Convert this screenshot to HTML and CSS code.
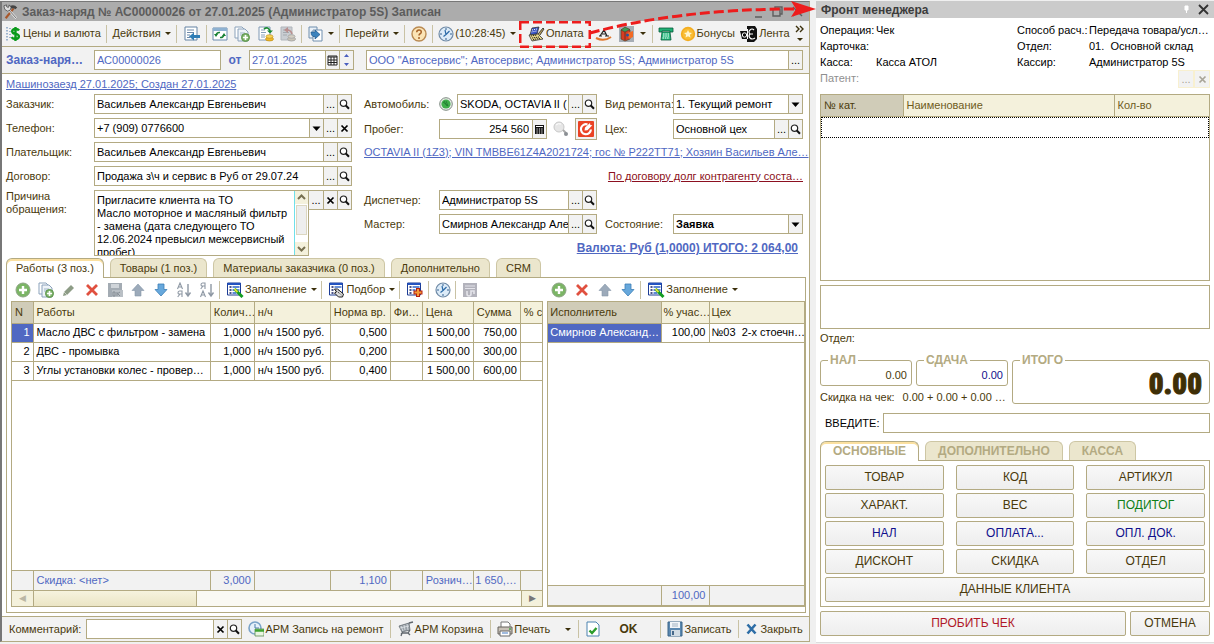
FILE: index.html
```
<!DOCTYPE html>
<html lang="ru">
<head>
<meta charset="utf-8">
<title>Заказ-наряд</title>
<link rel="stylesheet" href="styles.css">
</head>
<body>
<svg class="sprite" aria-hidden="true">
  <symbol id="i-tools" viewBox="0 0 18 18"><path d="M3 16 12 5" stroke="#a8572a" stroke-width="2.4"/><path d="M8 2q5-2 8 2l-2 2q-2-2-5-1z" fill="#444"/><path d="M5 5 15 16" stroke="#eee" stroke-width="2.4"/><path d="M5 5 15 16" stroke="#555" stroke-width="1"/><path d="M1 2l3-1 0 2 2 1 1-3 2 3-1 3-3 1-3-2z" fill="#ddd" stroke="#444" stroke-width=".8"/></symbol>
  <symbol id="i-dollar" viewBox="0 0 16 16"><path d="M1 1v14M4 2v1M4 5v1M4 8v1M4 11v1" stroke="#7a9ac0" stroke-width="1.4" stroke-dasharray="1.5 1.5"/><path d="M13 4.5q-1-1.6-3.6-1.5Q6 3.200 6.200 5.300 6.400 7.400 9.600 7.900 13 8.500 12.900 10.600 12.600 12.900 9.400 13 6.600 13 5.600 11.200M9.500 1v14" fill="none" stroke="#0b9a1b" stroke-width="2.400"/></symbol>
  <symbol id="i-docleft" viewBox="0 0 18 16"><path d="M2 1h12v13H2z" fill="#fff" stroke="#6583a4"/><path d="M4 4h7M4 6.500h7M4 9h3M4 11.500h3" stroke="#6d88a8"/><path d="M17 9v3h-6v2.500L6 10.500l5-4V9z" fill="#2f7db5"/></symbol>
  <symbol id="i-refresh" viewBox="0 0 16 16"><path d="M1 2h14v12H1z" fill="#fff" stroke="#6a8caf"/><path d="M1 2h14v3H1z" fill="#8fb2d2"/><path d="M4 9q1-3 4-2.500M12 9q-1 3-4 2.500" fill="none" stroke="#178032" stroke-width="1.500"/><path d="M2 8h4L4 11zM10 10h4l-2-3z" fill="#178032"/></symbol>
  <symbol id="i-docplus" viewBox="0 0 16 16"><path d="M1 1h7l2 2v9H1z" fill="#fff" stroke="#8ba2bb"/><path d="M4 3h7l3 3v9H4z" fill="#eef3f8" stroke="#8ba2bb"/><path d="M6 7h5M6 9h4" stroke="#9fb4c8"/><circle cx="11.500" cy="11.500" r="4" fill="#7fb36b" stroke="#5a9449"/><path d="M11.500 9v5M9 11.500h5" stroke="#fff" stroke-width="1.600"/></symbol>
  <symbol id="i-post" viewBox="0 0 16 16"><path d="M1 1h11v13H1z" fill="#fff" stroke="#7e98b4"/><path d="M3 4h4M3 6.500h5M3 9h4M3 11h4" stroke="#87a0ba"/><path d="M6 3q4-3 6 2" fill="none" stroke="#1c8a35" stroke-width="1.800"/><path d="M9 4.500h6l-3 3z" fill="#1c8a35"/><ellipse cx="11.500" cy="13" rx="4" ry="2" fill="#f0b92b" stroke="#b58511" stroke-width=".6"/><ellipse cx="11.500" cy="10.500" rx="3.500" ry="1.800" fill="#f9d458" stroke="#b58511" stroke-width=".6"/></symbol>
  <symbol id="i-unpost" viewBox="0 0 16 16"><path d="M1 1h11v13H1z" fill="#c9cdd2" stroke="#b0b5bb"/><path d="M3 4h6M3 6.500h6M3 9h4" stroke="#a4a9af"/><path d="M12 8Q11 4 7 4" fill="none" stroke="#b98e8e" stroke-width="1.600"/><path d="M8 1v6L4 4z" fill="#b98e8e"/><ellipse cx="11.500" cy="13" rx="4" ry="2" fill="#c9c3b6" stroke="#aaa"/><ellipse cx="11.500" cy="10.500" rx="3.500" ry="1.800" fill="#d4cec2" stroke="#aaa"/></symbol>
  <symbol id="i-goto" viewBox="0 0 16 16"><path d="M1 1h8v11H1z" fill="#e9f0f7" stroke="#6f8eae"/><path d="M5 4h9v11H5z" fill="#fff" stroke="#6f8eae"/><path d="M3 6h4V4l5 4.500L7 13v-2.500H5q-2-1-2-4.500z" fill="#3c83bd" stroke="#1d5689" stroke-width=".7"/></symbol>
  <symbol id="i-help" viewBox="0 0 16 16"><circle cx="8" cy="8" r="7" fill="#fbe4b6" stroke="#b98a52" stroke-width="1.400"/><path d="M5.700 6.300Q5.800 4 8 4t2.300 2Q10.300 7.200 8.800 8 8 8.500 8 9.600" fill="none" stroke="#a8642a" stroke-width="1.500"/><circle cx="8" cy="12" r="1" fill="#a8642a"/></symbol>
  <symbol id="i-clock" viewBox="0 0 16 16"><circle cx="8" cy="8" r="7" fill="#dcebf8" stroke="#6f8aa6" stroke-width="1.200"/><path d="M8 2v2M8 12v2M2 8h2M12 8h2" stroke="#34618f"/><path d="M7 4l1 4.500-2.500 2M8 8.500 11.500 5" fill="none" stroke="#2c6ba8" stroke-width="1.200"/></symbol>
  <symbol id="i-cash" viewBox="0 0 18 16"><path d="M5 2 12 1 10 8 3 9z" fill="#3a55c5" stroke="#222" stroke-width=".7"/><path d="M5 4l5-1M4.500 6l5-1" stroke="#fff" stroke-dasharray="1 1"/><path d="M2 9l9-1 5 5-11 2z" fill="#e8d98a" stroke="#333" stroke-width=".8"/><path d="M4 10l6-1M5 12l7-1M6 13.500l7-1" stroke="#222" stroke-dasharray="1.200 .8"/><path d="M11 8l5-6 1 1-4 6" fill="#b9a15b" stroke="#222" stroke-width=".8"/></symbol>
  <symbol id="i-sign" viewBox="0 0 18 16"><path d="M1 12q8 4 15-1" fill="none" stroke="#e1772d" stroke-width="2"/><path d="M5 10 9 4l3 6M7 8h4M4 10h3M10 10h4" fill="none" stroke="#222" stroke-width="1.200"/></symbol>
  <symbol id="i-fire" viewBox="0 0 18 16"><path d="M1 0h15v16H1z" fill="#a6adb5"/><path d="M3 4 7 2l5 2v9l-5 2-4-2z" fill="#d83c22" stroke="#542" stroke-width=".7"/><path d="M7 6v8" fill="none" stroke="#532" stroke-width=".8"/><path d="M3 4 7 1l5 2.500L7 6z" fill="#3a9d57" stroke="#532" stroke-width=".6"/><path d="M9 7l6-2v6l-4 2z" fill="#f26a24"/><circle cx="9.500" cy="9" r="1.500" fill="#24539c"/></symbol>
  <symbol id="i-phone" viewBox="0 0 16 16"><path d="M1 2h14v4h-3V5H4v1H1z" fill="#1faf74" stroke="#075c3b" stroke-width=".8"/><path d="M4 6h8l1 8H3z" fill="#25b97d" stroke="#075c3b" stroke-width=".8"/><path d="M5 8h6M5 10h6M4.500 12h7" stroke="#fff" stroke-dasharray="1.500 .8"/></symbol>
  <symbol id="i-star" viewBox="0 0 16 16"><circle cx="8" cy="8" r="7.200" fill="#f4ad20"/><circle cx="8" cy="8" r="5.500" fill="#f9bd35"/><path d="M8 4l1.200 2.600 2.800.3-2.100 1.900.6 2.800L8 10.200l-2.500 1.400.6-2.800L4 6.900l2.800-.3z" fill="#fff5cf"/></symbol>
  <symbol id="i-tape" viewBox="0 0 18 16"><path d="M0 5h8v8H2z" fill="#111"/><path d="M7 0h8l2 3v10l-3 3H7z" fill="#111"/><circle cx="4.500" cy="9" r="2.200" fill="none" stroke="#fff"/><path d="M14 4q-2-2-4 0t0 4h3M10 8q-2 2 0 4t5 0M7.500 3v10" fill="none" stroke="#fff" stroke-width="1.100"/></symbol>
  <symbol id="i-calendar" viewBox="0 0 11 11"><path d="M1 1h9v9H1z" fill="#fff" stroke="#222"/><path d="M1 2h9M1 5h9M1 7.500h9M4 2v8M7 2v8" stroke="#222"/></symbol>
  <symbol id="i-calc" viewBox="0 0 11 11"><path d="M1 1h9v9H1z" fill="#111"/><path d="M2 2.500h7" stroke="#fff"/><path d="M2.500 5h7M2.500 7h7M2.500 9h7" stroke="#fff" stroke-dasharray="1.200 1.200"/></symbol>
  <symbol id="i-find" viewBox="0 0 11 11"><circle cx="4.500" cy="4.200" r="3.200" fill="#fff" stroke="#222" stroke-width="1.200"/><path d="M6.800 6.500 10 9.800" stroke="#111" stroke-width="2"/></symbol>
  <symbol id="i-x" viewBox="0 0 11 11"><path d="M2.500 2.500l6 6M8.500 2.500l-6 6" stroke="currentColor" stroke-width="1.700"/></symbol>
  <symbol id="i-down" viewBox="0 0 11 11"><path d="M1.500 3.500h8l-4 4.500z" fill="currentColor"/></symbol>
  <symbol id="i-skoda" viewBox="0 0 14 14"><circle cx="7" cy="7" r="6.300" fill="#e8ece8" stroke="#7e8a80"/><circle cx="7" cy="7" r="4.600" fill="#3fae49"/><path d="M4 5l5 4M5 4l3 5M7 4l2 5" stroke="#1f7a30" stroke-width=".8" fill="none"/></symbol>
  <symbol id="i-lens" viewBox="0 0 16 16"><circle cx="6" cy="6" r="5" fill="#e6e6e6" stroke="#c8c8c8"/><path d="M3 4q2-2 5-1" stroke="#fff" fill="none"/><path d="M10 9l3 3" stroke="#aaa" stroke-width="2"/><circle cx="13" cy="13" r="2" fill="#8b8f94"/></symbol>
  <symbol id="i-target" viewBox="0 0 16 16"><rect width="16" height="16" rx="1" fill="#ea4324"/><path d="M9.500 3.500a5 5 0 1 0 3.400 5" fill="none" stroke="#fff" stroke-width="2.200"/><path d="M6.500 9.500 7 6.500 12 2l.3 2 2 .2-4.800 5z" fill="#fff"/></symbol>
  <symbol id="i-add" viewBox="0 0 16 16"><circle cx="8" cy="8" r="7" fill="#7bb565" stroke="#8da584"/><path d="M8 4v8M4 8h8" stroke="#fff" stroke-width="2.400"/></symbol>
  <symbol id="i-pencil" viewBox="0 0 16 16"><path d="M3 10 10 3l3 3-7 7-4 1z" fill="#8d9c86"/><path d="M3 10l3 3" stroke="#ccd3c8"/></symbol>
  <symbol id="i-del" viewBox="0 0 16 16"><path d="M3 3l10 10M13 3 3 13" stroke="#e0503f" stroke-width="2.800"/></symbol>
  <symbol id="i-diskg" viewBox="0 0 16 16"><path d="M1 1h14v14H1z" fill="#a3abb3"/><path d="M4 2h8v4H4z" fill="#cfd4d9"/><path d="M5 8h11v7H5z" fill="#b9bfc5"/><path d="M6 10h2v4H6zM10 10v4M10 12l3-2M11 12l2 2" stroke="#858d95" fill="none"/></symbol>
  <symbol id="i-up" viewBox="0 0 16 16"><path d="M8 2l6 6.500H11V14H5V8.500H2z" fill="#9caaba" stroke="#8797a9" stroke-width=".6"/></symbol>
  <symbol id="i-dn" viewBox="0 0 16 16"><path d="M8 14 2 7.500H5V2h6v5.500h3z" fill="#67a8dc" stroke="#3c7fb6" stroke-width=".8"/></symbol>
  <symbol id="i-sort" viewBox="0 0 16 16"><path d="M1.500 7 4 1l2.500 6M2.300 5h3.400M6 15V9H3.500Q2 9.200 2 10.700T3.500 12H6M4 12l-2.300 3" fill="none" stroke="#8e98a4" stroke-width="1.100"/><path d="M12 2v11M9.500 10.500 12 14l2.500-3.500" fill="none" stroke="#8e98a4" stroke-width="1.400"/></symbol>
  <symbol id="i-sortd" viewBox="0 0 16 16"><path d="M1.500 15 4 9l2.500 6M2.300 13h3.400M6 7V1H3.500Q2 1.200 2 2.700T3.500 4H6M4 4 1.700 7" fill="none" stroke="#8e98a4" stroke-width="1.100"/><path d="M12 2v11M9.500 10.500 12 14l2.500-3.500" fill="none" stroke="#8e98a4" stroke-width="1.400"/></symbol>
  <symbol id="i-fill" viewBox="0 0 17 16"><path d="M1 1h13v12H1z" fill="#fff" stroke="#1c3c95"/><path d="M1 2h13" stroke="#2453bf" stroke-width="2"/><path d="M3 5h2M3 8h2M3 11h2" stroke="#101c60" stroke-width="1.700"/><path d="M6 5h7M6 8h7M6 11h4" stroke="#2b63c9" stroke-width="1.400"/><path d="M8 7l8 8" stroke="#129c20" stroke-width="3"/><path d="M8 7l3 3" stroke="#d8de31" stroke-width="2"/></symbol>
  <symbol id="i-pick" viewBox="0 0 17 16"><path d="M1 1h13v12H1z" fill="#fff" stroke="#1c3c95"/><path d="M1 2h13" stroke="#2453bf" stroke-width="2"/><path d="M3 5h2M3 8h2M3 11h2" stroke="#101c60" stroke-width="1.700"/><path d="M6 5h7" stroke="#2b63c9" stroke-width="1.400"/><path d="M6 7h3l6 5-1 3h-4L6 11l2-1z" fill="#ddd" stroke="#222"/><path d="M8 9l5 4M10 8l4 3" stroke="#222" stroke-dasharray="1 1"/></symbol>
  <symbol id="i-addrow" viewBox="0 0 17 16"><path d="M1 1h13v12H1z" fill="#fff" stroke="#1c3c95"/><path d="M1 2h13" stroke="#2453bf" stroke-width="2"/><path d="M3 5h2M3 8h2M3 11h2" stroke="#101c60" stroke-width="1.700"/><path d="M6 5h7M6 8h3" stroke="#2b63c9" stroke-width="1.400"/><path d="M11.500 6v9M7 10.500h9" stroke="#b52010" stroke-width="4"/><path d="M11.500 7v7M8 10.500h7" stroke="#f49a38" stroke-width="2"/></symbol>
  <symbol id="i-book" viewBox="0 0 16 16"><path d="M1 1h14v14H1z" fill="#b3b3bc"/><path d="M3 4h10M3 6.500h10" stroke="#e4e4ea" stroke-width="1.200"/><path d="M5 9v3q0 2 2 2t2-2V9h3v3" fill="none" stroke="#e4e4ea" stroke-width="1.600"/></symbol>
  <symbol id="i-clockg" viewBox="0 0 16 16"><circle cx="7" cy="7" r="6" fill="#e6f1fa" stroke="#7aa3c8" stroke-width="1.600"/><path d="M7 3v4h4" fill="none" stroke="#4b7dab"/><path d="M7 8h9v7H7z" fill="#e9f5e2" stroke="#5a8a50" stroke-width=".8"/><path d="M7 9.500h9" stroke="#3fa331" stroke-width="2.500"/></symbol>
  <symbol id="i-cart" viewBox="0 0 16 16"><path d="M1 5l10-3 1 7-8 2z" fill="#9aa1a8" stroke="#666d74" stroke-width=".8"/><path d="M3 5l2 5M6 4l1 5M9 3l1 6M2 7l9-2" stroke="#e0e4e8" stroke-width=".8"/><path d="M11 2l4-1M12 9l-2 3H4l1-1M4 12l-1 3M10 12l2 2" fill="none" stroke="#5f666d" stroke-width="1.300"/></symbol>
  <symbol id="i-print" viewBox="0 0 16 16"><path d="M4 6V1h7l2 2v3" fill="#fff" stroke="#777"/><path d="M1 6h14v7H1z" fill="#c9c2b8" stroke="#67625c"/><path d="M3 10h10v5H3z" fill="#fff" stroke="#666"/><path d="M5 12h6" stroke="#4177c0"/><circle cx="13" cy="8" r=".9" fill="#3da23d"/></symbol>
  <symbol id="i-ok" viewBox="0 0 14 16"><path d="M1 1h9l3 3v11H1z" fill="#fff" stroke="#4c83b0"/><path d="M3.500 9.500 6 12l4.500-5" fill="none" stroke="#2b9c2b" stroke-width="2.400"/></symbol>
  <symbol id="i-disk" viewBox="0 0 16 16"><path d="M1 1h14v14H1z" fill="#5b88b0" stroke="#3b6488"/><path d="M3 1h10v6H3z" fill="#f2f5f8"/><path d="M5 3h6M5 5h6" stroke="#a3b3c2"/><path d="M4 9h9v6H4z" fill="#d2dce4"/><path d="M5 10h2v4H5z" fill="#47698a"/></symbol>
  <symbol id="i-close" viewBox="0 0 14 14"><path d="M2.500 2.500l8 9M10.500 2.500l-8 9" stroke="#2d6da6" stroke-width="2.600"/></symbol>
</svg>

<main class="desk">
  <section class="order">
    <header class="title">
      <svg class="i18"><use href="#i-tools"/></svg>
      <h1>Заказ-наряд № АС00000026 от 27.01.2025 (Администратор 5S) Записан</h1>
      <svg class="winctl" viewBox="0 0 54 14"><path d="M2 12h7M20 4h7v7h-7zM22 4V2h7v7h-2M40 2l9 9M49 2l-9 9" fill="none" stroke="#5d5d5d" stroke-width="1.400"/></svg>
    </header>

    <nav class="bar top">
      <button class="tb"><svg class="i16"><use href="#i-dollar"/></svg>Цены и валюта</button><i class="sep"></i>
      <button class="tb more">Действия</button><i class="sep"></i>
      <button class="tb" aria-label="Показать в списке"><svg class="i18"><use href="#i-docleft"/></svg></button><i class="sep"></i>
      <button class="tb" aria-label="Обновить"><svg class="i16"><use href="#i-refresh"/></svg></button>
      <button class="tb" aria-label="Копировать"><svg class="i16"><use href="#i-docplus"/></svg></button>
      <i class="gap"></i>
      <button class="tb" aria-label="Провести"><svg class="i16"><use href="#i-post"/></svg></button>
      <button class="tb" aria-label="Отменить проведение"><svg class="i16"><use href="#i-unpost"/></svg></button><i class="sep"></i>
      <button class="tb more" aria-label="Ввести на основании"><svg class="i16"><use href="#i-goto"/></svg></button><i class="sep"></i>
      <button class="tb more">Перейти</button><i class="sep"></i>
      <button class="tb" aria-label="Справка"><svg class="i16"><use href="#i-help"/></svg></button><i class="sep"></i>
      <button class="tb more"><svg class="i16"><use href="#i-clock"/></svg>(10:28:45)</button>
      <span class="callout">
        <button class="tb"><svg class="i18"><use href="#i-cash"/></svg>Оплата</button>
        <svg class="frame" aria-hidden="true"><rect x="1" y="1" width="70" height="25" fill="none" stroke="#ed1c1c" stroke-width="3" stroke-dasharray="9 4"/></svg>
        <svg class="arrow" viewBox="0 0 228 36" aria-hidden="true"><path d="M1 32Q90 8 206 8" fill="none" stroke="#ed1c1c" stroke-width="3" stroke-dasharray="10 4"/><path d="M227 8 202 0l5 8-5 8z" fill="#ed1c1c"/></svg>
      </span>
      <button class="tb" aria-label="Подпись"><svg class="i18"><use href="#i-sign"/></svg></button>
      <button class="tb more" aria-label="Оборудование"><svg class="i18"><use href="#i-fire"/></svg></button><i class="sep"></i>
      <button class="tb" aria-label="Звонок"><svg class="i16"><use href="#i-phone"/></svg></button>
      <button class="tb"><svg class="i16"><use href="#i-star"/></svg>Бонусы</button>
      <button class="tb"><svg class="i18"><use href="#i-tape"/></svg>Лента</button>
      <button class="tb over" aria-label="Ещё"><svg viewBox="0 0 10 18"><path d="M1 1l3 3-3 3M5 1l3 3-3 3" fill="none" stroke="#3b2f0b" stroke-width="1.400"/><path d="M2 13h6l-3 3z" fill="#3b2f0b"/></svg></button>
    </nav>

    <div class="bar ident">
      <label class="idlabel" for="num">Заказ-наря…</label>
      <span class="field fnum"><input id="num" class="blue" value="АС00000026"></span>
      <label class="idot" for="date">от</label>
      <span class="field fdate"><input id="date" class="blue" value="27.01.2025"><button aria-label="Календарь"><svg><use href="#i-calendar"/></svg></button><button class="spin" aria-label="Изменить дату"><svg viewBox="0 0 11 18"><path d="M3 6h5L5.500 3zM3 12h5l-2.500 3z" fill="#4a5fc0"/></svg></button></span>
      <span class="field forg"><input class="blue" aria-label="Организация" value="ООО &quot;Автосервис&quot;; Автосервис; Администратор 5S; Администратор 5S"><button>...</button></span>
    </div>

    <div class="form">
      <a class="wide" href="#">Машинозаезд 27.01.2025; Создан 27.01.2025</a>
      <div class="col">
        <div class="row"><label for="cust">Заказчик:</label><span class="field"><input id="cust" value="Васильев Александр Евгеньевич"><button>...</button><button aria-label="Открыть"><svg><use href="#i-find"/></svg></button></span></div>
        <div class="row"><label for="tel">Телефон:</label><span class="field"><input id="tel" value="+7 (909) 0776600"><button aria-label="Список"><svg><use href="#i-down"/></svg></button><button>...</button><button aria-label="Очистить"><svg><use href="#i-x"/></svg></button></span></div>
        <div class="row"><label for="payer">Плательщик:</label><span class="field"><input id="payer" value="Васильев Александр Евгеньевич"><button>...</button><button aria-label="Открыть"><svg><use href="#i-find"/></svg></button></span></div>
        <div class="row"><label for="deal">Договор:</label><span class="field"><input id="deal" value="Продажа з\ч и сервис в Руб от 29.07.24"><button>...</button><button aria-label="Открыть"><svg><use href="#i-find"/></svg></button></span></div>
        <div class="row reason"><label for="why">Причина<br>обращения:</label>
          <div class="memo"><textarea id="why">Пригласите клиента на ТО
Масло моторное и масляный фильтр - замена (дата следующего ТО 12.06.2024 превысил межсервисный пробег)</textarea><div class="vscroll"><svg viewBox="0 0 13 13"><path d="M3 8l3.500-3.500L10 8" fill="none" stroke="#777050" stroke-width="2"/></svg><i></i><svg viewBox="0 0 13 13"><path d="M3 5l3.500 3.500L10 5" fill="none" stroke="#777050" stroke-width="2"/></svg></div></div>
          <span class="field tail"><button>...</button><button aria-label="Очистить"><svg><use href="#i-x"/></svg></button><button aria-label="Открыть"><svg><use href="#i-find"/></svg></button></span>
        </div>
      </div>
      <div class="col">
        <div class="row quad"><label for="car">Автомобиль:</label><div class="carcell"><svg class="brand"><use href="#i-skoda"/></svg><span class="field"><input id="car" value="SKODA, OCTAVIA II ("><button>...</button><button aria-label="Открыть"><svg><use href="#i-find"/></svg></button></span></div>
          <label for="kind">Вид ремонта:</label><span class="field"><select id="kind"><option>1. Текущий ремонт</option></select><button aria-label="Список"><svg><use href="#i-down"/></svg></button></span></div>
        <div class="row quad"><label for="km">Пробег:</label><div class="kmcell"><span class="field"><input id="km" class="num" value="254 560"><button aria-label="Калькулятор"><svg><use href="#i-calc"/></svg></button></span><svg class="i16"><use href="#i-lens"/></svg><button class="target" aria-label="Запись"><svg class="i16"><use href="#i-target"/></svg></button></div>
          <label for="shop">Цех:</label><span class="field"><input id="shop" value="Основной цех"><button>...</button><button aria-label="Открыть"><svg><use href="#i-find"/></svg></button></span></div>
        <div class="row"><a href="#">OCTAVIA II (1Z3); VIN TMBBE61Z4A2021724; гос № Р222ТТ71; Хозяин Васильев Але…</a></div>
        <div class="row end"><a class="debt" href="#">По договору долг контрагенту соста…</a></div>
        <div class="row quad"><label for="disp">Диспетчер:</label><span class="field"><input id="disp" value="Администратор 5S"><button>...</button><button aria-label="Открыть"><svg><use href="#i-find"/></svg></button></span></div>
        <div class="row quad"><label for="master">Мастер:</label><span class="field"><input id="master" value="Смирнов Александр Але"><button>...</button><button aria-label="Открыть"><svg><use href="#i-find"/></svg></button></span>
          <label for="state">Состояние:</label><span class="field"><select id="state" class="strong"><option>Заявка</option></select><button aria-label="Список"><svg><use href="#i-down"/></svg></button></span></div>
        <div class="row end"><a class="total" href="#">Валюта: Руб (1,0000) ИТОГО: 2 064,00</a></div>
      </div>
    </div>

    <div class="tabs">
      <button class="tab on">Работы (3 поз.)</button><button class="tab">Товары (1 поз.)</button><button class="tab">Материалы заказчика (0 поз.)</button><button class="tab">Дополнительно</button><button class="tab">CRM</button>
    </div>
    <div class="sheet">
      <div class="pane">
        <div class="tools">
          <button class="tb" aria-label="Добавить"><svg class="i16"><use href="#i-add"/></svg></button>
          <button class="tb" aria-label="Добавить копированием"><svg class="i16"><use href="#i-docplus"/></svg></button>
          <button class="tb" aria-label="Изменить"><svg class="i16"><use href="#i-pencil"/></svg></button>
          <button class="tb" aria-label="Удалить"><svg class="i16"><use href="#i-del"/></svg></button>
          <button class="tb" aria-label="Завершить"><svg class="i16"><use href="#i-diskg"/></svg></button>
          <button class="tb" aria-label="Вверх"><svg class="i16"><use href="#i-up"/></svg></button>
          <button class="tb" aria-label="Вниз"><svg class="i16"><use href="#i-dn"/></svg></button>
          <button class="tb" aria-label="По возрастанию"><svg class="i16"><use href="#i-sort"/></svg></button>
          <button class="tb" aria-label="По убыванию"><svg class="i16"><use href="#i-sortd"/></svg></button><i class="sep"></i>
          <button class="tb more"><svg class="i18"><use href="#i-fill"/></svg>Заполнение</button><i class="sep"></i>
          <button class="tb more"><svg class="i18"><use href="#i-pick"/></svg>Подбор</button><i class="sep"></i>
          <button class="tb" aria-label="Добавить строки"><svg class="i18"><use href="#i-addrow"/></svg></button><i class="sep"></i>
          <button class="tb" aria-label="Время"><svg class="i16"><use href="#i-clock"/></svg></button><i class="sep"></i>
          <button class="tb" aria-label="Журнал"><svg class="i16"><use href="#i-book"/></svg></button>
        </div>
        <div class="grid">
          <table>
            <colgroup><col class="w21"><col><col class="w44"><col class="w76"><col class="w60"><col class="w32"><col class="w51"><col class="w47"><col class="w22"></colgroup>
            <thead><tr><th class="cur">N</th><th>Работы</th><th>Колич…</th><th>н/ч</th><th>Норма вр.</th><th>Фи…</th><th>Цена</th><th>Сумма</th><th>% с</th></tr></thead>
            <tbody>
              <tr><td class="num sel">1</td><td>Масло ДВС с фильтром - замена</td><td class="num">1,000</td><td>н/ч 1500 руб.</td><td class="num">0,500</td><td></td><td class="num">1 500,00</td><td class="num">750,00</td><td></td></tr>
              <tr><td class="num">2</td><td>ДВС - промывка</td><td class="num">1,000</td><td>н/ч 1500 руб.</td><td class="num">0,200</td><td></td><td class="num">1 500,00</td><td class="num">300,00</td><td></td></tr>
              <tr><td class="num">3</td><td>Углы установки колес - провер…</td><td class="num">1,000</td><td>н/ч 1500 руб.</td><td class="num">0,400</td><td></td><td class="num">1 500,00</td><td class="num">600,00</td><td></td></tr>
            </tbody>
          </table>
          <div class="void"></div>
          <table class="sum">
            <colgroup><col class="w21"><col><col class="w44"><col class="w76"><col class="w60"><col class="w32"><col class="w51"><col class="w47"><col class="w22"></colgroup>
            <tbody><tr><td></td><td>Скидка: &lt;нет&gt;</td><td class="num">3,000</td><td></td><td class="num">1,100</td><td></td><td>Рознич…</td><td class="num">1 650,…</td><td></td></tr></tbody>
          </table>
          <div class="hscroll"><span class="dim">◀</span><i></i><span>▶</span></div>
        </div>
      </div>
      <div class="pane">
        <div class="tools">
          <button class="tb" aria-label="Добавить"><svg class="i16"><use href="#i-add"/></svg></button>
          <button class="tb" aria-label="Удалить"><svg class="i16"><use href="#i-del"/></svg></button>
          <button class="tb" aria-label="Вверх"><svg class="i16"><use href="#i-up"/></svg></button>
          <button class="tb" aria-label="Вниз"><svg class="i16"><use href="#i-dn"/></svg></button><i class="sep"></i>
          <button class="tb more"><svg class="i18"><use href="#i-fill"/></svg>Заполнение</button>
        </div>
        <div class="grid">
          <table>
            <colgroup><col><col class="w48"><col class="w95"></colgroup>
            <thead><tr><th class="cur">Исполнитель</th><th>% учас…</th><th>Цех</th></tr></thead>
            <tbody><tr><td class="sel">Смирнов Александ…</td><td class="num">100,00</td><td>№03&nbsp; 2-х стоечн…</td></tr></tbody>
          </table>
          <div class="void"></div>
          <table class="sum">
            <colgroup><col><col class="w48"><col class="w95"></colgroup>
            <tbody><tr><td></td><td class="num">100,00</td><td></td></tr></tbody>
          </table>
        </div>
      </div>
    </div>

    <footer class="bar foot">
      <label for="note">Комментарий:</label>
      <span class="field fnote"><input id="note"><button aria-label="Очистить"><svg><use href="#i-x"/></svg></button><button aria-label="Открыть"><svg><use href="#i-find"/></svg></button></span>
      <button class="tb"><svg class="i16"><use href="#i-clockg"/></svg>АРМ Запись на ремонт</button><i class="sep"></i>
      <button class="tb"><svg class="i16"><use href="#i-cart"/></svg>АРМ Корзина</button><i class="sep"></i>
      <button class="tb more print"><svg class="i16"><use href="#i-print"/></svg>Печать</button><i class="sep"></i>
      <button class="tb okb"><svg class="i16"><use href="#i-ok"/></svg>OK</button><i class="sep"></i>
      <button class="tb"><svg class="i16"><use href="#i-disk"/></svg>Записать</button><i class="sep"></i>
      <button class="tb"><svg class="i14"><use href="#i-close"/></svg>Закрыть</button>
    </footer>
  </section>

  <aside class="front">
    <header class="title light"><h2>Фронт менеджера</h2>
      <svg class="pin" viewBox="0 0 30 14"><path d="M4 3h3v4H4zM5.500 7v3" fill="#fff" stroke="#fff"/><path d="M18 2l9 9M27 2l-9 9" stroke="#333" stroke-width="1.800"/></svg>
    </header>
    <div class="body">
      <dl class="info">
        <dt>Операция:</dt><dd>Чек</dd><dt>Способ расч.:</dt><dd>Передача товара/усл…</dd>
        <dt>Карточка:</dt><dd></dd><dt>Отдел:</dt><dd>01.&nbsp; Основной склад</dd>
        <dt>Касса:</dt><dd>Касса АТОЛ</dd><dt>Кассир:</dt><dd>Администратор 5S</dd>
        <dt class="off">Патент:</dt><dd class="patent"><button disabled>...</button><button disabled aria-label="Очистить"><svg><use href="#i-x"/></svg></button></dd>
      </dl>
      <div class="grid goods">
        <table>
          <colgroup><col class="w82"><col><col class="w95"></colgroup>
          <thead><tr><th class="cur">№ кат.</th><th>Наименование</th><th>Кол-во</th></tr></thead>
        </table>
        <div class="focusrow"></div>
        <div class="void"></div>
      </div>
      <div class="note"></div>
      <div class="dept">Отдел:</div>
      <div class="sums">
        <fieldset><legend>НАЛ</legend><output>0.00</output></fieldset>
        <fieldset><legend>СДАЧА</legend><output class="navy">0.00</output></fieldset>
        <fieldset class="grand"><legend>ИТОГО</legend><output>0.00</output></fieldset>
        <div class="disc"><span>Скидка на чек:</span><span>0.00 + 0.00 + 0.00 …</span></div>
      </div>
      <div class="enter"><label for="code">ВВЕДИТЕ:</label><span class="field"><input id="code"></span></div>
      <div class="tabs caps">
        <button class="tab on">ОСНОВНЫЕ</button><button class="tab">ДОПОЛНИТЕЛЬНО</button><button class="tab">КАССА</button>
      </div>
      <div class="keys">
        <button class="key">ТОВАР</button><button class="key">КОД</button><button class="key">АРТИКУЛ</button>
        <button class="key">ХАРАКТ.</button><button class="key">ВЕС</button><button class="key green">ПОДИТОГ</button>
        <button class="key navy">НАЛ</button><button class="key navy">ОПЛАТА...</button><button class="key navy">ОПЛ. ДОК.</button>
        <button class="key">ДИСКОНТ</button><button class="key">СКИДКА</button><button class="key">ОТДЕЛ</button>
        <button class="key full">ДАННЫЕ КЛИЕНТА</button>
      </div>
      <div class="final"><button class="key red">ПРОБИТЬ ЧЕК</button><button class="key">ОТМЕНА</button></div>
    </div>
  </aside>
</main>
</body>
</html>
```

FILE: styles.css
```
:root {
  --line: #b3aa82;
  --brown: #4a3a0c;
  --blue: #5068c2;
  --face: #f2f2f2;
  --head: #f4f1dc;
  --tab: #ebe6cd;
}
* { box-sizing: border-box; }
body {
  margin: 0;
  background: #f0f0f0;
  color: var(--brown);
  font: 11px/13px "Liberation Sans", Arial, sans-serif;
}
button, input, select, textarea { font: inherit; color: inherit; margin: 0; }
.sprite { position: absolute; width: 0; height: 0; }
.i18 { width: 18px; height: 16px; flex: none; }
.i16 { width: 16px; height: 16px; flex: none; }
.i14 { width: 14px; height: 14px; flex: none; }
a { color: var(--blue); white-space: nowrap; }

.desk {
  display: grid;
  grid-template-columns: minmax(0, 810fr) minmax(0, 398fr);
  column-gap: 6px;
  min-height: 100vh;
}
.order {
  display: flex;
  flex-direction: column;
  margin: 1px 0 2px;
  border: 1px solid #777;
  border-left-width: 2px;
  border-color: #777 var(--line) var(--line) #777;
  background: #fff;
}
.title {
  display: flex;
  align-items: center;
  gap: 2px;
  height: 19px;
  background: #acacac;
  color: #5c5c5c;
}
.title h1, .title h2 { flex: 1; margin: 0; font-size: 12px; line-height: 16px; white-space: nowrap; }
.winctl { width: 54px; height: 14px; margin-right: 2px; }

.bar { display: flex; align-items: center; background: var(--face); border-bottom: 1px solid var(--line); }
.tb {
  display: inline-flex;
  align-items: center;
  gap: 1px;
  padding: 0 4px;
  border: 0;
  background: none;
  white-space: nowrap;
}
.more::after { content: ""; margin-left: 3px; border: 3px solid transparent; border-top-color: #3b2f0b; border-bottom: 0; }
.sep { flex: none; width: 1px; height: 18px; margin: 0 2px; background: #c9c2a4; }
.gap { width: 2px; }
.top { height: 26px; justify-content: space-between; padding: 0 2px; }
.top .tb { padding: 0 2px; }
.callout { position: relative; display: inline-flex; padding: 0 6px; }
.frame { position: absolute; left: 0; top: -5px; width: 72px; height: 27px; }
.arrow { position: absolute; left: 70px; top: -25px; width: 228px; height: 36px; z-index: 2; }
.over svg { width: 10px; height: 18px; }

.field { display: flex; flex: 1; min-width: 0; height: 20px; border: 1px solid var(--line); background: #fff; color: #000; }
.field input, .field select {
  flex: 1;
  min-width: 0;
  width: 0;
  padding: 0 0 0 2px;
  border: 0;
  background: none;
  outline: 0;
  appearance: none;
}
.field button {
  display: flex;
  flex: none;
  align-items: center;
  justify-content: center;
  width: 14px;
  padding: 0;
  border: 0;
  border-left: 1px solid var(--line);
  background: var(--face);
  line-height: 12px;
}
.field button svg, .patent svg { width: 11px; height: 11px; }
.field button.spin svg { height: 18px; }
.field .blue { color: var(--blue); }
.field .num { text-align: right; padding-right: 3px; }
.field .strong { font-weight: bold; }

.ident { height: 27px; padding: 0 6px 0 4px; color: var(--blue); font-weight: bold; }
.ident input, .ident button { font-weight: normal; }
.idlabel { width: 88px; font-size: 12px; }
.idot { width: 28px; text-align: center; font-size: 12px; }
.fnum { flex: 126 1 0; }
.fdate { flex: 104 1 0; margin-right: 12px; }
.forg { flex: 439 1 0; }

.form {
  display: grid;
  grid-template-columns: minmax(0, 346fr) minmax(0, 439fr);
  gap: 3px 12px;
  padding: 4px 6px 0 4px;
}
.wide { grid-column: 1 / -1; line-height: 13px; }
.col { display: flex; flex-direction: column; gap: 4px; }
.row { display: flex; align-items: center; height: 20px; }
.row > label:first-child { flex: none; width: 88px; }
.row.quad { display: grid; grid-template-columns: minmax(0, 75fr) minmax(0, 158fr) minmax(0, 76fr) minmax(0, 130fr); }
.quad > * { min-width: 0; }
.quad > label { white-space: nowrap; }
.quad > label:first-child { width: auto; }
.quad > label:nth-of-type(2) { padding-left: 8px; }
.end { justify-content: flex-end; }
.carcell, .kmcell { display: flex; align-items: center; }
.brand { width: 14px; height: 14px; flex: none; }
.carcell { gap: 4px; }
.kmcell { gap: 6px; }
.target { display: flex; flex: none; padding: 2px; border: 1px solid var(--line); background: var(--face); }
.debt { color: #8c1020; }
.total { font-size: 12px; font-weight: bold; margin-right: 5px; }
.row.reason { height: auto; align-items: flex-start; }
.memo { display: flex; flex: 1; min-width: 0; height: 66px; border: 1px solid var(--line); color: #000; }
.memo textarea { flex: 1; min-width: 0; padding: 3px 4px 0 2px; border: 0; outline: 0; resize: none; overflow: hidden; }
.vscroll { display: flex; flex-direction: column; width: 14px; border-left: 1px solid #6fe0ea; }
.vscroll svg { width: 13px; height: 13px; background: var(--head); }
.vscroll i { height: 30px; margin: 1px; background: #eee; border: 1px solid #dcd7c0; }
.vscroll svg:last-child { margin-top: auto; }
.field.tail { flex: none; border-left: 0; }
.field.tail button:first-child { border-left: 0; }

.tabs { display: flex; gap: 6px; align-items: flex-end; padding-left: 4px; }
.tab {
  height: 19px;
  padding: 0 9px;
  border: 1px solid #cdc6a4;
  border-bottom: 0;
  border-radius: 6px 6px 0 0;
  background: var(--tab);
  white-space: nowrap;
}
.tab.on {
  position: relative;
  z-index: 1;
  height: 20px;
  margin-bottom: -1px;
  border-color: var(--line);
  background: #fff;
  box-shadow: inset 0 2px #fbe0a0;
}
.sheet {
  display: grid;
  grid-template-columns: minmax(0, 533fr) minmax(0, 258fr);
  gap: 4px;
  flex: 1;
  margin: 0 3px 3px 4px;
  padding: 0 0 5px 4px;
  border: 1px solid var(--line);
}
.pane { display: flex; flex-direction: column; min-width: 0; }
.tools { display: flex; align-items: center; height: 23px; }
.tools .tb { padding: 0 3px 0 4px; }
.tools .sep { margin: 0 2px 0 1px; }
.grid { display: flex; flex: 1; flex-direction: column; border: 1px solid var(--line); background: #fff; overflow: hidden; }
table { width: 100%; table-layout: fixed; border-collapse: collapse; color: #000; }
th, td { overflow: hidden; height: 19px; padding: 0 0 0 3px; border: 1px solid var(--line); text-align: left; font-weight: normal; white-space: nowrap; }
th { height: 21px; background: var(--head); color: var(--brown); }
.cur { background: #d0ccb8; }
tr > :first-child { border-left: 0; }
tr > :last-child { border-right: 0; }
thead tr > * { border-top: 0; }
td.num { padding: 0 3px 0 0; text-align: right; }
td.sel { background: var(--blue); color: #fff; }
.pane + .pane th, .pane + .pane td { padding-left: 2px; }
.sum td { background: var(--face); color: var(--blue); height: 20px; }
.void { flex: 1; }
.w21 { width: 21px; } .w22 { width: 22px; } .w32 { width: 32px; } .w44 { width: 44px; }
.w47 { width: 47px; } .w48 { width: 48px; } .w51 { width: 51px; } .w60 { width: 60px; }
.w76 { width: 76px; } .w82 { width: 82px; } .w95 { width: 95px; }
.hscroll { display: flex; height: 15px; background: #faf9f3; color: #777; font-size: 9px; line-height: 14px; text-align: center; }
.hscroll span { width: 21px; background: var(--head); }
.hscroll .dim { color: #bbb7a4; }
.hscroll i { width: 31%; border: 1px solid var(--line); border-width: 0 1px; background: linear-gradient(#f6f3de, #ebe5c5); }
.hscroll span:last-child { margin-left: auto; border-left: 1px solid var(--line); }

.foot { height: 25px; border-top: 1px solid var(--line); border-bottom: 0; padding: 0 4px 0 7px; justify-content: space-between; }
.foot .fnote { flex: 0 1 156px; }
.foot .tb { padding: 0 2px; }
.foot .sep { margin: 0; }
.foot .print::after { margin-left: 14px; }
.foot .okb { gap: 18px; padding-right: 18px; font-size: 12px; font-weight: bold; }

.front { display: flex; flex-direction: column; margin: 1px 0; background: #fff; border-bottom: 1px solid #ddd; }
.light { height: 17px; padding: 0 3px 0 5px; background: #cbcbcb; color: #3c3c3c; }
.pin { width: 30px; height: 14px; }
.body { display: flex; flex: 1; flex-direction: column; padding: 4px 4px 6px; }
.info {
  display: grid;
  grid-template-columns: minmax(0, 56fr) minmax(0, 141fr) minmax(0, 72fr) minmax(0, 121fr);
  margin: 0;
  color: #000;
  line-height: 16px;
  white-space: nowrap;
}
.info dd { margin: 0; }
.info .off { color: #8f8f8f; }
.info .patent { grid-column: 2 / -1; display: flex; justify-content: flex-end; }
.patent button { display: flex; align-items: center; justify-content: center; width: 16px; height: 18px; padding: 0; border: 1px solid #f8f0d0; background: var(--face); color: #a8a498; }
.goods { min-height: 120px; margin-top: 6px; }
.goods thead th { color: #6f5c1c; }
.goods th.cur { color: var(--brown); }
.focusrow { height: 21px; border: 1px dotted #000; }
.note { height: 44px; margin-top: 4px; border: 1px solid var(--line); }
.dept { padding: 3px 0 8px; }
.sums {
  display: grid;
  grid-template-columns: minmax(0, 92fr) minmax(0, 92fr) minmax(0, 198fr);
  column-gap: 4px;
}
fieldset { min-width: 0; margin: 0; padding: 2px 4px 3px; border: 1px solid var(--line); border-radius: 3px; text-align: right; }
legend { margin-left: 3px; padding: 0 2px; color: var(--line); font-size: 12px; line-height: 14px; font-weight: bold; text-align: left; }
fieldset output { display: block; }
.navy { color: #10108c; }
.grand { grid-column: 3; grid-row: 1 / 3; }
.grand output { font: 900 29px/30px "Roboto Condensed", Roboto, sans-serif; -webkit-text-stroke: 1px #3f2f06; padding-right: 3px; color: #3f2f06; }
.disc { display: flex; grid-column: 1 / 3; grid-row: 2; gap: 8px; padding: 5px 0 0; white-space: nowrap; }
.enter { display: flex; align-items: center; gap: 4px; margin-top: 9px; padding-left: 5px; color: #000; }
.caps { margin-top: 8px; padding: 0; }
.caps .tab { padding: 0 12px; color: var(--line); font-size: 12px; font-weight: bold; }
.keys { display: grid; grid-template-columns: repeat(3, minmax(0, 1fr)); gap: 3px 12px; padding: 4px; border: 1px solid var(--line); }
.key { height: 25px; padding: 0; border: 1px solid var(--line); border-radius: 2px; background: linear-gradient(#f8f8f8, #eee); font-size: 12px; color: var(--brown); }
.full { grid-column: 1 / -1; }
.key.green { color: #108018; }
.key.navy { color: #10108c; }
.key.red { color: #b01828; }
.final { display: grid; grid-template-columns: minmax(0, 306fr) minmax(0, 80fr); gap: 4px; margin-top: 4px; }
```
